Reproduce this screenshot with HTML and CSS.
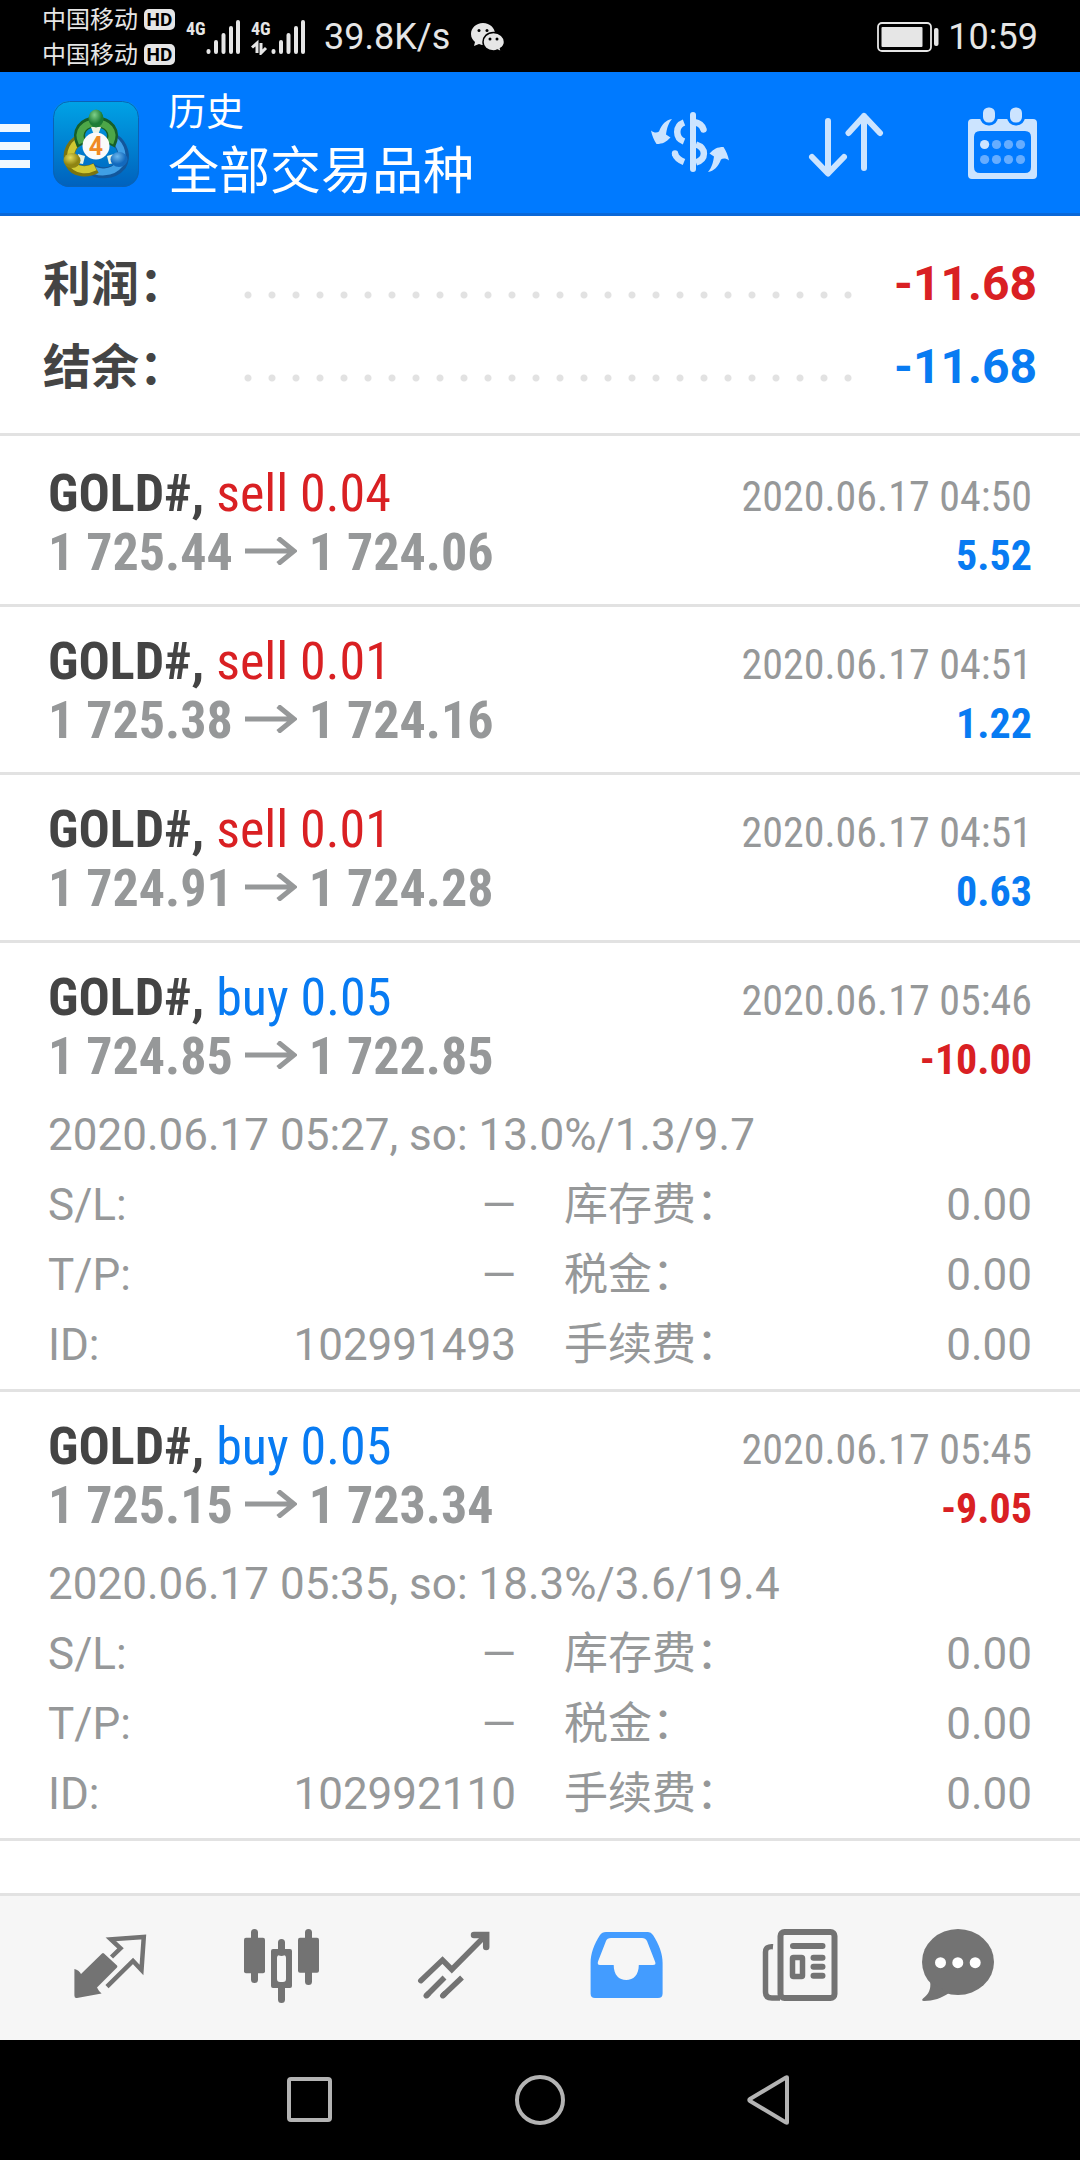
FILE: index.html
```html
<!DOCTYPE html>
<html lang="zh-CN">
<head>
<meta charset="utf-8">
<meta name="viewport" content="width=device-width, initial-scale=1">
<title>历史</title>
<link rel="stylesheet" href="styles.css">
</head>
<body>
<div class="status">
  <div class="carriers">
    <div class="carrier"><span>中国移动</span><span class="hd">HD</span></div>
    <div class="carrier"><span>中国移动</span><span class="hd">HD</span></div>
  </div>
  <div class="signal">
    <span class="net">4G</span>
    <svg width="54" height="36" viewBox="0 0 54 36" stroke="#e6e6e6" stroke-width="4" stroke-linecap="round"><path d="M22.500 33v-1M30 33V23M37.500 33V16M45 33V9M52 33V3"/></svg>
  </div>
  <div class="signal">
    <span class="net">4G</span>
    <svg width="54" height="36" viewBox="0 0 54 36" stroke="#e6e6e6" stroke-width="4" stroke-linecap="round"><path d="M22.500 33v-1M30 33V23M37.500 33V16M45 33V9M52 33V3"/><path d="M1 28.500L6 24v10M10 24v10l5-5" fill="none" stroke-width="3" stroke-linecap="butt"/></svg>
  </div>
  <span class="speed">39.8K/s</span>
  <svg class="wechat" width="36" height="32" viewBox="0 0 36 32"><path fill="#e6e6e6" d="M13 2C6 2 1 7 1 13c0 4 2 6 4 8l-1 4 5-2c2 1 4 1 5 1 7 0 11-5 11-11S20 2 13 2z"/><path fill="#e6e6e6" stroke="#000" stroke-width="1.500" d="M23.500 11.500C17 11.500 13 16 13 21s4 9 10.500 9c1.500 0 3-.5 4-1l4 2-1-3.500c2.500-1.500 4-4 4-6.500 0-5-4.500-9.500-11-9.500z"/><g fill="#000"><circle cx="9" cy="9.500" r="1.500"/><circle cx="17" cy="9.500" r="1.500"/><circle cx="20" cy="18" r="1.500"/><circle cx="27" cy="18" r="1.500"/></g></svg>
  <svg class="battery" width="62" height="30" viewBox="0 0 62 30"><rect x="1" y="1" width="53" height="28" rx="4" fill="none" stroke="#e6e6e6" stroke-width="1.800"/><rect x="4.500" y="5" width="41" height="20" rx="1" fill="#e6e6e6"/><rect x="57" y="6" width="4.500" height="18" rx="2" fill="#e6e6e6"/></svg>
  <time class="clock">10:59</time>
</div>

<header class="appbar">
  <button class="menu" aria-label="菜单"><i></i><i></i><i></i></button>
  <svg class="logo" width="86" height="86" viewBox="0 0 86 86">
    <defs>
      <linearGradient id="bg" x1="0" y1="0" x2="0" y2="1"><stop offset="0" stop-color="#00a3e6"/><stop offset="1" stop-color="#0061bd"/></linearGradient>
      <radialGradient id="gg" cx=".4" cy=".3"><stop offset="0" stop-color="#7fd08a"/><stop offset="1" stop-color="#1c7c35"/></radialGradient>
      <radialGradient id="yg" cx=".4" cy=".3"><stop offset="0" stop-color="#e4dc5a"/><stop offset="1" stop-color="#8f8412"/></radialGradient>
      <radialGradient id="cg" cx=".4" cy=".3"><stop offset="0" stop-color="#6cb8ee"/><stop offset="1" stop-color="#1269bd"/></radialGradient>
    </defs>
    <rect width="86" height="86" rx="16" fill="url(#bg)"/>
    <rect x=".5" y=".5" width="85" height="85" rx="16" fill="none" stroke="#0b62b5"/>
    <g fill="none">
      <path d="M36 66C44 74 60 74 68 64 73 56 70 44 61 38" stroke="#12579c" stroke-width="11"/>
      <path d="M36 66C44 73 59 73 67 63 71 56 69 45 61 39" stroke="#3f9fe6" stroke-width="7"/>
      <path d="M32 37C19 40 13 52 18 63 22 71 34 72 43 67" stroke="#7a7410" stroke-width="11"/>
      <path d="M32 37C20 41 15 52 19 62 23 70 34 70 42 66" stroke="#d0c832" stroke-width="7"/>
      <path d="M29 44C22 30 31 21 43 21S64 30 57 44" stroke="#165f29" stroke-width="11"/>
      <path d="M29 42C23 30 32 22 43 22S63 30 57 42" stroke="#4da648" stroke-width="7"/>
    </g>
    <path d="M38 26h10l-3 8h-4zM25 53l7 2-2 8-6-1zM61 53l-7 2 2 8 6-1z" fill="#e8f3e4"/>
    <ellipse cx="43" cy="17.500" rx="7.500" ry="9" fill="url(#gg)"/>
    <ellipse cx="19" cy="59.500" rx="8.500" ry="7.500" fill="url(#yg)"/>
    <ellipse cx="66" cy="58.500" rx="8.500" ry="7.500" fill="url(#cg)"/>
    <circle cx="43" cy="45" r="13.500" fill="#fafafa"/>
    <text class="logo-num" x="43" y="54" text-anchor="middle">4</text>
  </svg>
  <div class="titles">
    <h1>历史</h1>
    <p>全部交易品种</p>
  </div>
  <div class="actions">
    <button aria-label="货币"><svg width="80" height="72" viewBox="0 0 80 72"><g transform="translate(0 2)"><g fill="#cce4ff"><path id="swap" d="M1 20.500C4 23 7 23 9 21.500 12 14 16 10 22 9 18 14 17 18 16 24.500L20.500 27.500C16 32 13 34 6.500 34 4 30 2 26 1 20.500z"/><use href="#swap" transform="rotate(180 40 35.500)"/></g><g fill="none" stroke="#cce4ff" stroke-width="6.500"><path d="M34 12.500C25 16 25 28 34 31.500M46 34.500C56.500 38 56.500 49 46 52.500"/><path d="M43 5v54" stroke-width="6" stroke-linecap="round"/><path d="M44 12C50 13 52.500 16 53.500 19.500" stroke-linecap="round"/><path d="M34 52C29 50 26 47 25 44"/></g><circle cx="25" cy="43.500" r="3.200" fill="#cce4ff"/></g></svg></button>
    <button aria-label="排序"><svg width="80" height="72" viewBox="2 0 80 72" fill="none" stroke="#cce4ff" stroke-width="6" stroke-linecap="round" stroke-linejoin="round"><path d="M22 13v50M6 49L22 65.500 38 49M58 60V8M42.500 25L58 8l16 17"/></svg></button>
    <button aria-label="日期"><svg width="74" height="76" viewBox="0 0 74 76"><path fill="#cce4ff" fill-rule="evenodd" d="M6 13H67q4 0 4 4V69q0 4-4 4H6q-4 0-4-4V17q0-4 4-4zM14 25q-6 0-6 6V61q0 6 6 6H59q6 0 6-6V31q0-6-6-6z"/><g fill="#cce4ff" stroke="#007aff" stroke-width="3"><rect x="15.500" y="0" width="15" height="18" rx="7"/><rect x="42.500" y="0" width="15" height="18" rx="7"/></g><circle cx="18.600" cy="38.500" r="4.600" fill="#cce4ff"/><g fill="#66adff"><circle cx="30.500" cy="38.500" r="4.600"/><circle cx="42.500" cy="38.500" r="4.600"/><circle cx="54.500" cy="38.500" r="4.600"/><circle cx="18.600" cy="53.500" r="4.600"/><circle cx="30.500" cy="53.500" r="4.600"/><circle cx="42.500" cy="53.500" r="4.600"/><circle cx="54.500" cy="53.500" r="4.600"/></g></svg></button>
  </div>
</header>

<main class="content">
  <dl class="summary">
    <div class="sum-row"><dt>利润：</dt><dd class="neg">-11.68</dd></div>
    <div class="sum-row"><dt>结余：</dt><dd class="pos">-11.68</dd></div>
  </dl>
  <ul class="trades">
    <li class="trade">
      <div class="line"><span class="deal"><b>GOLD#,</b> <span class="neg">sell 0.04</span></span><time>2020.06.17 04:50</time></div>
      <div class="line"><span class="prices">1 725.44 <svg class="arrow" viewBox="0 0 52 28"><path d="M0 14H49M33 1L49 14 33 27"/></svg> 1 724.06</span><b class="profit pos">5.52</b></div>
    </li>
    <li class="trade">
      <div class="line"><span class="deal"><b>GOLD#,</b> <span class="neg">sell 0.01</span></span><time>2020.06.17 04:51</time></div>
      <div class="line"><span class="prices">1 725.38 <svg class="arrow" viewBox="0 0 52 28"><path d="M0 14H49M33 1L49 14 33 27"/></svg> 1 724.16</span><b class="profit pos">1.22</b></div>
    </li>
    <li class="trade">
      <div class="line"><span class="deal"><b>GOLD#,</b> <span class="neg">sell 0.01</span></span><time>2020.06.17 04:51</time></div>
      <div class="line"><span class="prices">1 724.91 <svg class="arrow" viewBox="0 0 52 28"><path d="M0 14H49M33 1L49 14 33 27"/></svg> 1 724.28</span><b class="profit pos">0.63</b></div>
    </li>
    <li class="trade open">
      <div class="line"><span class="deal"><b>GOLD#,</b> <span class="pos">buy 0.05</span></span><time>2020.06.17 05:46</time></div>
      <div class="line"><span class="prices">1 724.85 <svg class="arrow" viewBox="0 0 52 28"><path d="M0 14H49M33 1L49 14 33 27"/></svg> 1 722.85</span><b class="profit neg">-10.00</b></div>
      <div class="details">
        <p>2020.06.17 05:27, so: 13.0%/1.3/9.7</p>
        <dl>
          <div><dt>S/L:</dt><dd>—</dd></div><div><dt>库存费：</dt><dd>0.00</dd></div>
          <div><dt>T/P:</dt><dd>—</dd></div><div><dt>税金：</dt><dd>0.00</dd></div>
          <div><dt>ID:</dt><dd>102991493</dd></div><div><dt>手续费：</dt><dd>0.00</dd></div>
        </dl>
      </div>
    </li>
    <li class="trade open">
      <div class="line"><span class="deal"><b>GOLD#,</b> <span class="pos">buy 0.05</span></span><time>2020.06.17 05:45</time></div>
      <div class="line"><span class="prices">1 725.15 <svg class="arrow" viewBox="0 0 52 28"><path d="M0 14H49M33 1L49 14 33 27"/></svg> 1 723.34</span><b class="profit neg">-9.05</b></div>
      <div class="details">
        <p>2020.06.17 05:35, so: 18.3%/3.6/19.4</p>
        <dl>
          <div><dt>S/L:</dt><dd>—</dd></div><div><dt>库存费：</dt><dd>0.00</dd></div>
          <div><dt>T/P:</dt><dd>—</dd></div><div><dt>税金：</dt><dd>0.00</dd></div>
          <div><dt>ID:</dt><dd>102992110</dd></div><div><dt>手续费：</dt><dd>0.00</dd></div>
        </dl>
      </div>
    </li>
  </ul>
</main>

<nav class="tabs">
  <a href="#quotes" aria-label="行情"><svg viewBox="0 0 80 80"><path fill="currentColor" d="M4.400 41Q9 42 11 46L32 25.500Q33 24.500 34 25.500L47 37.500Q47.800 38.500 47 39.500L27 59.500Q28.500 63 31.600 65.500L7 70Q4.400 70.500 4.400 67.500z"/><path fill="none" stroke="currentColor" stroke-width="4.500" d="M41.500 29L50.500 20.300 40.900 11.300 73.800 8.900 71.500 42 63 33 37 58.700" stroke-linejoin="miter"/></svg></a>
  <a href="#charts" aria-label="图表"><svg viewBox="0 0 80 80"><g fill="none" stroke="currentColor" stroke-width="7" stroke-linecap="round"><path d="M11.500 4.500v47M65.500 4.500v49M38.500 14.500v10M38.500 58v13.500"/></g><g fill="currentColor"><rect x="1" y="9.700" width="21" height="35.500" rx="2"/><rect x="55" y="9.700" width="21" height="35" rx="2"/><path fill-rule="evenodd" d="M30 21H47q2 0 2 2V58q0 2-2 2H30q-2 0-2-2V23q0-2 2-2zM37 27q-3 0-3 3V51q0 3 3 3h3q3 0 3-3V30q0-3-3-3z"/></g></svg></a>
  <a href="#trade" aria-label="交易"><svg viewBox="0 0 80 80" fill="none" stroke="currentColor" stroke-width="5.500" stroke-linecap="round"><path d="M5.800 52.700L27.500 32 36.800 41.500 70 8"/><path d="M59 7H71.200V19" stroke-width="6.500"/><path d="M11.300 67.700l2-2M27.800 67.700l2-2"/><path stroke-linecap="butt" d="M11.300 67.700L29.500 49.500M27.800 67.700L47 49.500"/></svg></a>
  <a class="active" href="#history" aria-label="历史" aria-current="page"><svg viewBox="0 0 80 80"><path fill="currentColor" fill-rule="evenodd" d="M18 4H60Q63 4 65 7C71 16 74.600 26 74.600 35V65.500Q74.600 70 70 70H7Q2.600 70 2.600 65.500V35C2.600 26 6 16 12 7Q14 4 18 4zM23 10Q19 10 18 13L10 33.500Q9 37 12 37H25.700C25.700 47 31 52 38.200 52S50.800 47 50.800 37H65Q68.500 37 67 33.500L59 13Q57.500 10 54 10z"/></svg></a>
  <a href="#news" aria-label="新闻"><svg viewBox="0 0 80 80" fill="none" stroke="currentColor"><rect x="20.500" y="4" width="54" height="66" rx="4" stroke-width="6"/><path stroke-width="5.500" d="M13 18.700Q5.500 18 5.500 24V64Q5.500 70 12 70H20"/><path stroke-width="6" stroke-linecap="round" d="M33 18H62.500M53.500 29.700h9M53.500 38.700h9M53.500 47.700h9"/><rect x="32.500" y="29.500" width="10" height="19" rx="1" stroke-width="5.500"/></svg></a>
  <a href="#messages" aria-label="消息"><svg viewBox="0 0 80 80"><g fill="currentColor"><ellipse cx="40" cy="34" rx="36" ry="33"/><path d="M12.200 54C13 61 11 66 5 70.500 3.500 72 4 73 6 73 15 73 24 70 31 65z"/></g><g fill="#fff"><circle cx="22.500" cy="34.700" r="5.500"/><circle cx="39.800" cy="34.700" r="5.500"/><circle cx="57.200" cy="34.700" r="5.500"/></g></svg></a>
</nav>

<div class="sysnav">
  <button aria-label="最近任务"><svg viewBox="0 0 52 52"><rect x="5" y="5" width="41" height="41" rx="2"/></svg></button>
  <button aria-label="主页"><svg viewBox="0 0 52 52"><circle cx="26" cy="26" r="23"/></svg></button>
  <button aria-label="返回"><svg viewBox="0 0 52 52"><path d="M43 3.500V48.500Q43 49 42 48.500L6 27Q4.500 26 6 25L42 3.500Q43 3 43 3.500z"/></svg></button>
</div>
</body>
</html>
```

FILE: styles.css
```css
* { box-sizing: border-box; }

body {
  margin: 0;
  min-height: 100vh;
  display: flex;
  flex-direction: column;
  background: #fff;
  color: #444;
  font-family: Roboto, "Noto Sans CJK SC", sans-serif;
}

h1, p, dl, dd, ul { margin: 0; padding: 0; }
ul { list-style: none; }
button { padding: 0; border: 0; background: none; font: inherit; color: inherit; }
svg { display: block; flex: none; }

.neg { color: #d92023; }
.pos { color: #087bf2; }

/* Phone status bar */
.status {
  height: 72px;
  padding: 2px 42px 0;
  display: flex;
  align-items: center;
  background: #000;
  color: #e6e6e6;
}
.carriers { display: grid; gap: 1px; }
.carrier {
  height: 34px;
  display: flex;
  align-items: center;
  gap: 6px;
  font-size: 24px;
  line-height: 34px;
}
.hd {
  width: 31px;
  height: 21px;
  border-radius: 5px;
  background: #e6e6e6;
  color: #000;
  font-size: 19px;
  font-weight: 700;
  line-height: 21px;
  text-align: center;
}
.signal {
  position: relative;
  margin-left: 11px;
}
.net {
  position: absolute;
  left: 0;
  top: 0;
  font: 700 18px/20px "Roboto Condensed", "Liberation Sans Narrow", Roboto, sans-serif;
}
.speed, .clock { font-size: 36px; line-height: 70px; }
.speed { margin-left: 19px; }
.wechat { margin-left: 20px; }
.battery { margin-left: auto; }
.clock { margin-left: 9px; }

/* Title bar */
.appbar {
  height: 144px;
  padding: 3px 40px 0 0;
  display: flex;
  align-items: center;
  background: #007aff;
  border-bottom: 3px solid #0a68d8;
  color: #fff;
}
.menu {
  width: 30px;
  padding-top: 4px;
  display: grid;
  gap: 10px;
}
.menu i { height: 8px; background: #f0f8ff; }
.logo { margin-left: 23px; }
.logo-num { font: 700 25px Roboto, sans-serif; fill: #f08a24; }
.titles { margin-left: 29px; flex: 1; }
.titles h1 { font-size: 38px; font-weight: 400; line-height: 56px; }
.titles p { font-size: 51px; line-height: 64px; }
.actions { display: flex; align-items: center; gap: 78px; }

/* Totals */
.content { flex: 1; }
.summary {
  padding: 26px 43px 25px;
  border-bottom: 3px solid #e2e2e2;
}
.sum-row {
  display: flex;
  align-items: center;
  height: 83px;
  font-size: 48px;
  font-weight: 700;
  line-height: 83px;
}
.sum-row dt { width: 193px; padding-top: 2px; }
.sum-row dd { width: 175px; order: 2; text-align: right; }

/* Dotted leader between label and amount */
.sum-row::after {
  content: "";
  order: 1;
  flex: 1;
  height: 8px;
  margin-top: 22px;
  background: radial-gradient(circle, #e2e2e2 3px, transparent 4px) 0 0 / 24px 8px repeat-x;
}

/* Deals */
.trades { padding-top: 3px; }
.trade {
  padding: 25px 48px 22px;
  border-bottom: 3px solid #e2e2e2;
  font-family: "Roboto Condensed", "Liberation Sans Narrow", Roboto, "Noto Sans CJK SC", sans-serif;
}
.trade.open { padding-bottom: 9px; }
.line {
  display: flex;
  align-items: baseline;
  justify-content: space-between;
  height: 59px;
  font-size: 52px;
  line-height: 59px;
  white-space: nowrap;
}
.line time, .profit { font-size: 42px; }
.line time, .prices { color: #969899; }
.prices { font-weight: 700; }
.arrow {
  display: inline-block;
  width: 52px;
  height: 28px;
  fill: none;
  stroke: currentColor;
  stroke-width: 5;
  vertical-align: 5px;
}

.details {
  padding-top: 14px;
  color: #969899;
  font: 400 44px/70px Roboto, "Noto Sans CJK SC", sans-serif;
}
.details dl {
  display: grid;
  grid-template-columns: 1fr 1fr;
  column-gap: 48px;
}
.details dl div {
  display: flex;
  justify-content: space-between;
  height: 70px;
}

/* Tab bar */
.tabs {
  height: 147px;
  padding: 0 50px 0 24px;
  display: grid;
  grid-template-columns: repeat(5, 6fr) 5fr;
  place-items: center;
  background: #f6f6f6;
  border-top: 3px solid #e2e2e2;
}
.tabs a { color: #737373; }
.tabs .active { color: #439cff; }
.tabs svg { width: 80px; height: 80px; }

/* Android navigation */
.sysnav {
  height: 120px;
  padding: 0 18%;
  display: grid;
  grid-template-columns: repeat(3, 1fr);
  place-items: center;
  background: #000;
}
.sysnav svg {
  width: 52px;
  height: 52px;
  fill: none;
  stroke: #b3b3b3;
  stroke-width: 4;
}
```
